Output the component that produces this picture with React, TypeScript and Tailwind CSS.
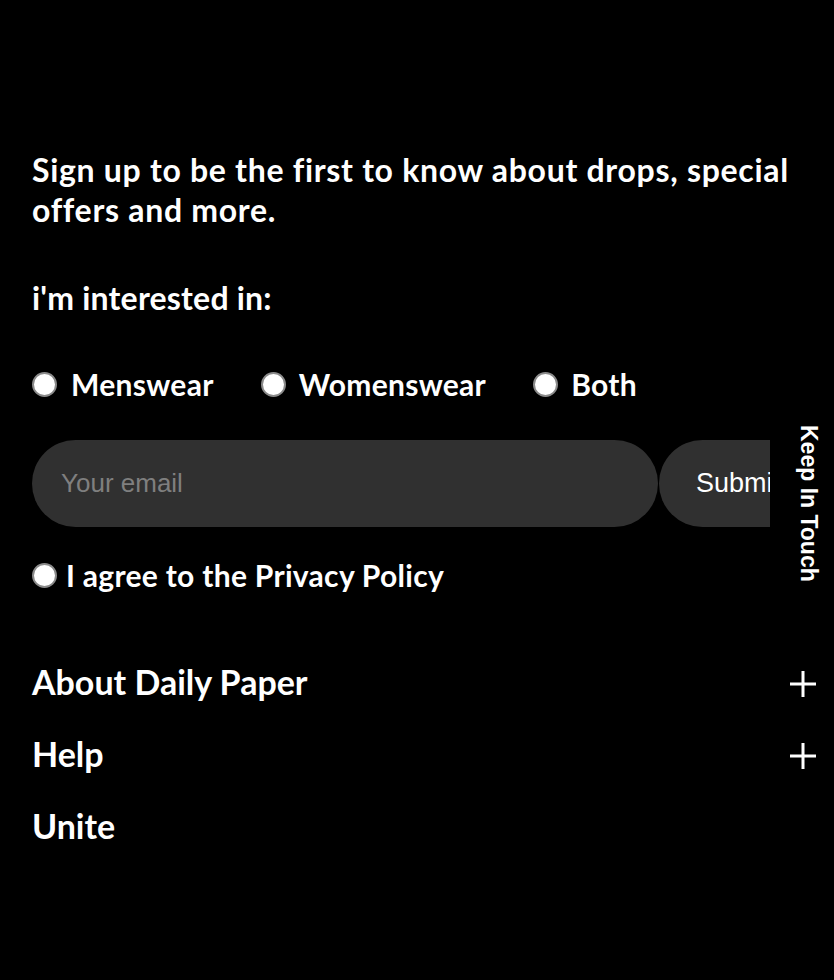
import React from "react";

function Radio() {
  return (
    <span className="inline-block w-[25px] h-[25px] shrink-0 rounded-full bg-white border-2 border-[#8a8a8a]" />
  );
}

function Plus() {
  return (
    <svg width="26" height="26" viewBox="0 0 26 26" className="shrink-0 translate-y-[3px]">
      <rect x="11.5" y="0" width="3" height="26" fill="white" />
      <rect x="0" y="11.5" width="26" height="3" fill="white" />
    </svg>
  );
}

export default function App() {
  const font = { fontFamily: "Lato, 'Noto Sans', sans-serif" };
  const arial = { fontFamily: "'Liberation Sans', Arial, sans-serif" };
  return (
    <div className="relative min-h-[980px] w-full overflow-hidden bg-black text-white" style={font}>
      <div className="pl-8 pr-[18px] pt-[150px]">
        <p className="text-[32px] leading-[40px] font-bold tracking-[0.7px] whitespace-nowrap">
          Sign up to be the first to know about drops, special
          <br />
          offers and more.
        </p>
        <p className="mt-[48px] text-[32px] leading-[40px] font-bold tracking-[0.2px]">i'm interested in:</p>

        <div className="mt-[50px] flex items-center text-[30px] font-bold leading-[32px] tracking-[0.3px]">
          <label className="flex items-center gap-[14px]">
            <Radio />
            <span>Menswear</span>
          </label>
          <label className="ml-[47px] flex items-center gap-[13px]">
            <Radio />
            <span>Womenswear</span>
          </label>
          <label className="ml-[47px] flex items-center gap-[13px]">
            <Radio />
            <span>Both</span>
          </label>
        </div>

        <div className="mt-[40px] flex w-[738px] overflow-hidden">
          <div
            className="flex h-[87px] w-[626px] shrink-0 items-center rounded-full bg-[#303030] pl-[29px] text-[26px] text-[#7f7f7f]"
            style={arial}
          >
            Your email
          </div>
          <div
            className="ml-px flex h-[87px] w-[200px] shrink-0 items-center rounded-full bg-[#303030] pl-[37px] text-[27px] text-white"
            style={arial}
          >
            Submit
          </div>
        </div>

        <label className="mt-[32px] flex items-center gap-[9px] text-[30px] font-bold leading-[32px] tracking-[0.3px]">
          <Radio />
          <span>I agree to the Privacy Policy</span>
        </label>

        <div className="mt-[54px] flex flex-col">
          <div className="flex h-[72px] items-center justify-between">
            <span className="text-[34px] font-bold">About Daily Paper</span>
            <Plus />
          </div>
          <div className="flex h-[72px] items-center justify-between">
            <span className="text-[34px] font-bold">Help</span>
            <Plus />
          </div>
          <div className="flex h-[72px] items-center justify-between">
            <span className="text-[34px] font-bold">Unite</span>
          </div>
        </div>
      </div>

      <div
        className="absolute right-[12px] top-[425px] text-[23px] font-bold leading-[26px] [writing-mode:vertical-rl]"
        style={arial}
      >
        Keep In Touch
      </div>
    </div>
  );
}
